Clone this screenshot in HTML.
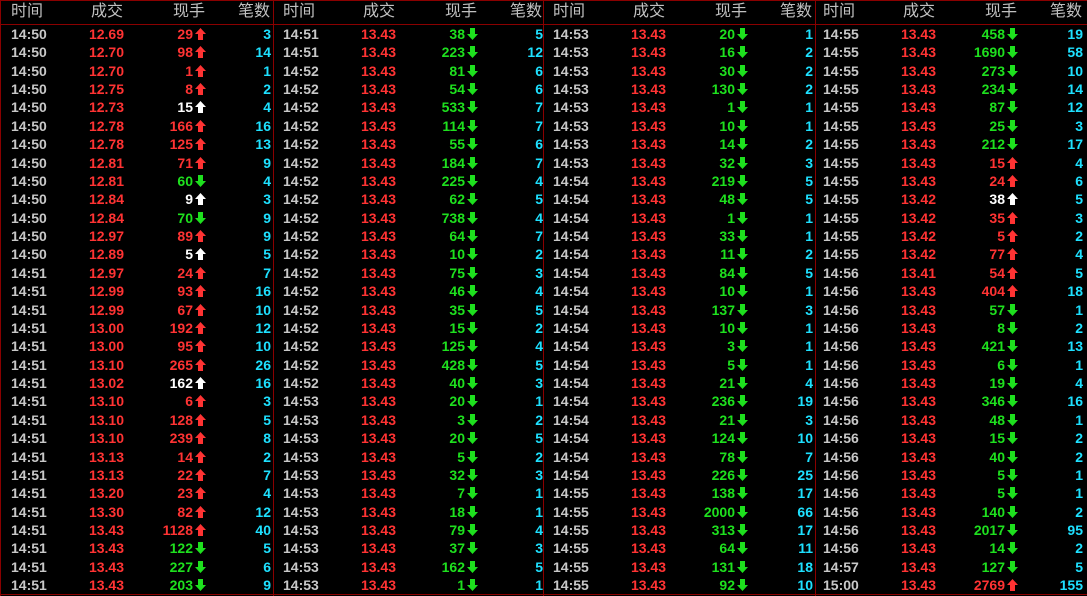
<!DOCTYPE html>
<html><head><meta charset="utf-8"><style>
body{margin:0;background:#000;width:1087px;height:596px;overflow:hidden;position:relative;font-family:"Liberation Sans","Noto Sans CJK SC",sans-serif}
.l{position:absolute;background:#8a0000}
.t{position:absolute;font-size:14px;font-weight:bold;line-height:18px;white-space:nowrap}
.h{position:absolute;font-size:16px;color:#c0c0c0;line-height:24px;top:0;white-space:nowrap;font-family:"Liberation Sans","Noto Sans CJK SC",sans-serif}
.g{color:#c8c8c8}.r{color:#ff3333}.gr{color:#1ee01e}.c{color:#1ee0ff}.w{color:#fff}
svg{position:absolute}
</style></head><body>
<div class="l" style="left:0;top:0;width:1087px;height:1px"></div>
<div class="l" style="left:0;top:24px;width:1087px;height:1px"></div>
<div class="l" style="left:0;top:594px;width:1087px;height:1px"></div>
<div class="l" style="left:0;top:0;width:1px;height:596px"></div>
<div class="l" style="left:273px;top:0;width:1px;height:596px"></div>
<div class="l" style="left:543px;top:0;width:1px;height:596px"></div>
<div class="l" style="left:815px;top:0;width:1px;height:596px"></div>
<div id="root"></div>
<script>
var cols=[
["14:50 12.69 29 u 3","14:50 12.70 98 u 14","14:50 12.70 1 u 1","14:50 12.75 8 u 2","14:50 12.73 15 w 4","14:50 12.78 166 u 16","14:50 12.78 125 u 13","14:50 12.81 71 u 9","14:50 12.81 60 d 4","14:50 12.84 9 w 3","14:50 12.84 70 d 9","14:50 12.97 89 u 9","14:50 12.89 5 w 5","14:51 12.97 24 u 7","14:51 12.99 93 u 16","14:51 12.99 67 u 10","14:51 13.00 192 u 12","14:51 13.00 95 u 10","14:51 13.10 265 u 26","14:51 13.02 162 w 16","14:51 13.10 6 u 3","14:51 13.10 128 u 5","14:51 13.10 239 u 8","14:51 13.13 14 u 2","14:51 13.13 22 u 7","14:51 13.20 23 u 4","14:51 13.30 82 u 12","14:51 13.43 1128 u 40","14:51 13.43 122 d 5","14:51 13.43 227 d 6","14:51 13.43 203 d 9"],
["14:51 13.43 38 d 5","14:51 13.43 223 d 12","14:52 13.43 81 d 6","14:52 13.43 54 d 6","14:52 13.43 533 d 7","14:52 13.43 114 d 7","14:52 13.43 55 d 6","14:52 13.43 184 d 7","14:52 13.43 225 d 4","14:52 13.43 62 d 5","14:52 13.43 738 d 4","14:52 13.43 64 d 7","14:52 13.43 10 d 2","14:52 13.43 75 d 3","14:52 13.43 46 d 4","14:52 13.43 35 d 5","14:52 13.43 15 d 2","14:52 13.43 125 d 4","14:52 13.43 428 d 5","14:52 13.43 40 d 3","14:53 13.43 20 d 1","14:53 13.43 3 d 2","14:53 13.43 20 d 5","14:53 13.43 5 d 2","14:53 13.43 32 d 3","14:53 13.43 7 d 1","14:53 13.43 18 d 1","14:53 13.43 79 d 4","14:53 13.43 37 d 3","14:53 13.43 162 d 5","14:53 13.43 1 d 1"],
["14:53 13.43 20 d 1","14:53 13.43 16 d 2","14:53 13.43 30 d 2","14:53 13.43 130 d 2","14:53 13.43 1 d 1","14:53 13.43 10 d 1","14:53 13.43 14 d 2","14:53 13.43 32 d 3","14:54 13.43 219 d 5","14:54 13.43 48 d 5","14:54 13.43 1 d 1","14:54 13.43 33 d 1","14:54 13.43 11 d 2","14:54 13.43 84 d 5","14:54 13.43 10 d 1","14:54 13.43 137 d 3","14:54 13.43 10 d 1","14:54 13.43 3 d 1","14:54 13.43 5 d 1","14:54 13.43 21 d 4","14:54 13.43 236 d 19","14:54 13.43 21 d 3","14:54 13.43 124 d 10","14:54 13.43 78 d 7","14:54 13.43 226 d 25","14:55 13.43 138 d 17","14:55 13.43 2000 d 66","14:55 13.43 313 d 17","14:55 13.43 64 d 11","14:55 13.43 131 d 18","14:55 13.43 92 d 10"],
["14:55 13.43 458 d 19","14:55 13.43 1690 d 58","14:55 13.43 273 d 10","14:55 13.43 234 d 14","14:55 13.43 87 d 12","14:55 13.43 25 d 3","14:55 13.43 212 d 17","14:55 13.43 15 u 4","14:55 13.43 24 u 6","14:55 13.42 38 w 5","14:55 13.42 35 u 3","14:55 13.42 5 u 2","14:55 13.42 77 u 4","14:56 13.41 54 u 5","14:56 13.43 404 u 18","14:56 13.43 57 d 1","14:56 13.43 8 d 2","14:56 13.43 421 d 13","14:56 13.43 6 d 1","14:56 13.43 19 d 4","14:56 13.43 346 d 16","14:56 13.43 48 d 1","14:56 13.43 15 d 2","14:56 13.43 40 d 2","14:56 13.43 5 d 1","14:56 13.43 5 d 1","14:56 13.43 140 d 2","14:56 13.43 2017 d 95","14:56 13.43 14 d 2","14:57 13.43 127 d 5","15:00 13.43 2769 u 155"]];
var bases=[0,272,542,812],h='';
var up='<path d="M5.5 0L11 6H8V12H3V6H0Z"/>',dn='<path d="M3 0H8V6H11L5.5 12L0 6H3Z"/>';
bases.forEach(function(b,ci){
 h+='<div class="h" style="left:'+(b+11)+'px">时间</div>';
 h+='<div class="h" style="right:'+(1087-b-123)+'px">成交</div>';
 h+='<div class="h" style="right:'+(1087-b-205)+'px">现手</div>';
 h+='<div class="h" style="right:'+(1087-b-270)+'px">笔数</div>';
 cols[ci].forEach(function(s,i){
  var p=s.split(' '),y=25+i*18.37;
  var vc=p[3]=='u'?'r':p[3]=='d'?'gr':'w',fc=p[3]=='u'?'#ff3333':p[3]=='d'?'#1ee01e':'#fff';
  h+='<div class="t g" style="left:'+(b+11)+'px;top:'+y+'px">'+p[0]+'</div>';
  h+='<div class="t r" style="right:'+(1087-b-124)+'px;top:'+y+'px">'+p[1]+'</div>';
  h+='<div class="t '+vc+'" style="right:'+(1087-b-193)+'px;top:'+y+'px">'+p[2]+'</div>';
  h+='<svg width="11" height="12" style="left:'+(b+195)+'px;top:'+(y+3)+'px" fill="'+fc+'">'+(p[3]=='d'?dn:up)+'</svg>';
  h+='<div class="t c" style="right:'+(1087-b-271)+'px;top:'+y+'px">'+p[4]+'</div>';
 });
});
document.getElementById('root').innerHTML=h;
</script>
</body></html>
